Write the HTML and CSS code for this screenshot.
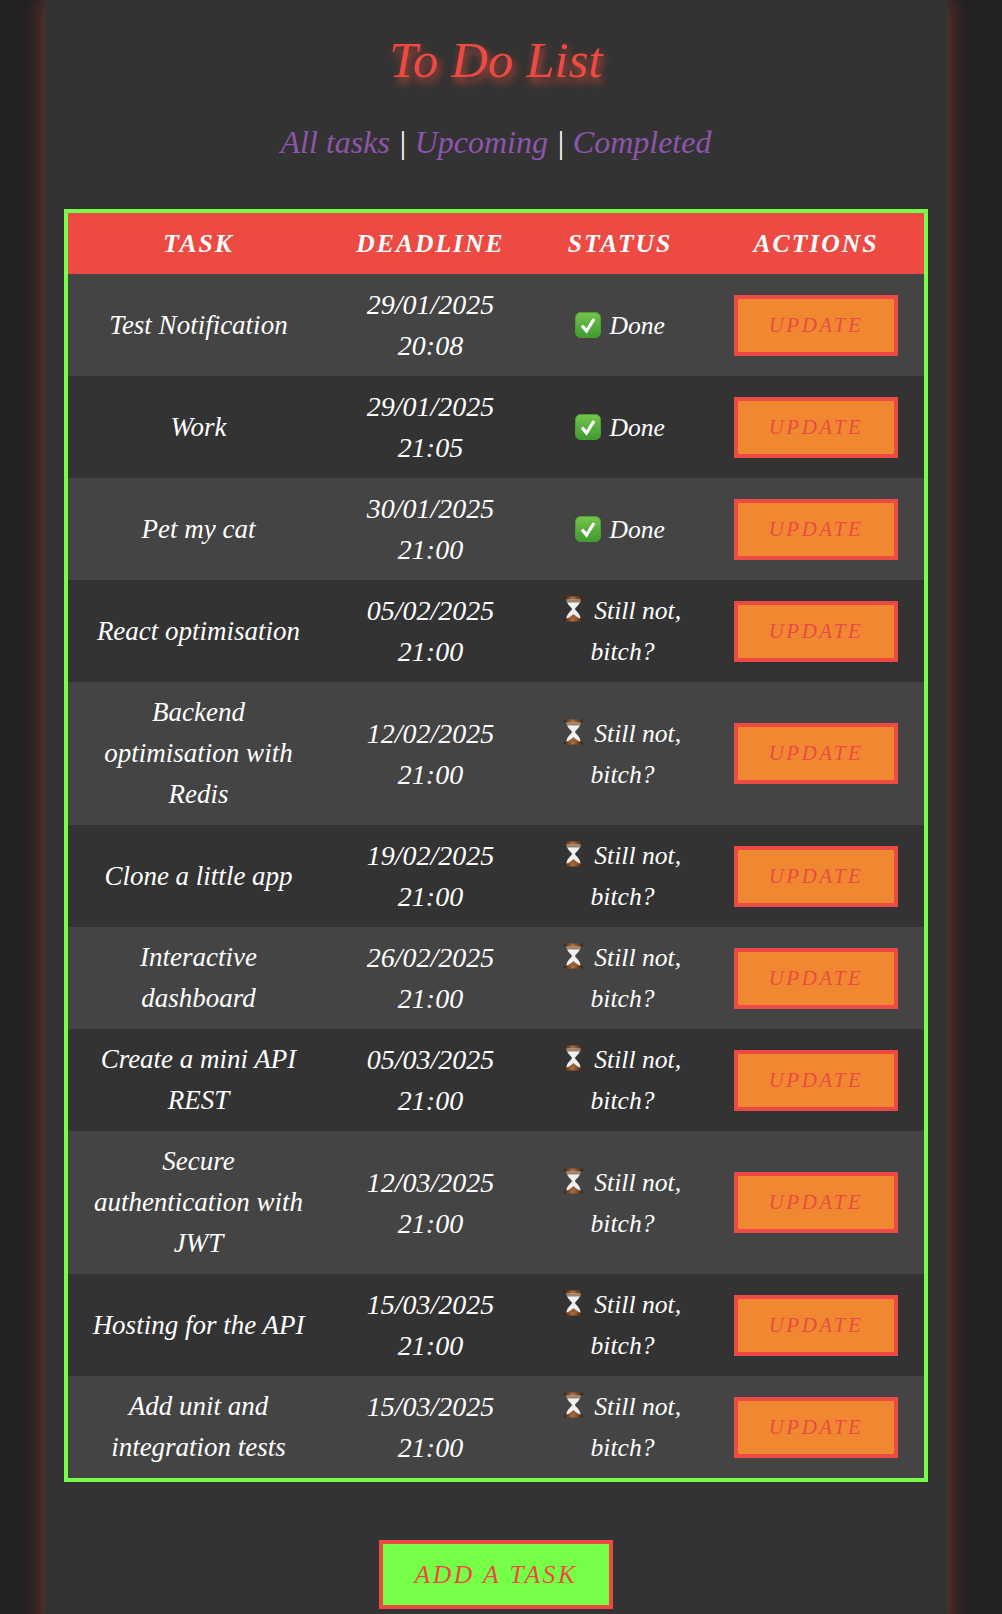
FILE: index.html
```html
<!DOCTYPE html>
<html lang="en"><head><meta charset="utf-8"><title>To Do List</title><link rel="stylesheet" href="styles.css"></head>
<body>
<svg class="defs" width="0" height="0" aria-hidden="true">
  <defs>
    <linearGradient id="g" x1="0" y1="0" x2="0" y2="1"><stop offset="0" stop-color="#74c54c"/><stop offset="1" stop-color="#3f9a2f"/></linearGradient>
    <linearGradient id="b" x1="0" y1="0" x2="1" y2="0"><stop offset="0" stop-color="#3a1e0e"/><stop offset=".45" stop-color="#b0703c"/><stop offset="1" stop-color="#3a1e0e"/></linearGradient>
    <symbol id="check" viewBox="0 0 26 26"><rect x="0.5" y="0.5" width="25" height="25" rx="5" fill="url(#g)" stroke="#4c9a38"/><path d="M7 13.5 L11.5 19 L19 7" fill="none" stroke="#fff" stroke-width="3.2"/></symbol>
    <symbol id="glass" viewBox="0 0 19 26"><path d="M2.5 3 H16.5 C16.5 8.5 12 10.5 11 13 C12 15.5 16.5 17.5 16.5 23 H2.5 C2.5 17.5 7 15.5 8 13 C7 10.5 2.5 8.5 2.5 3Z" fill="#f0f0f0"/><path d="M2.7 3.5 H16.3 V6.5 H2.9Z" fill="#9a8470"/><path d="M9.5 18 C11 20 14 21 16.4 23 H2.6 C5 21 8 20 9.5 18Z" fill="#96603a"/><rect x="0" y="0.5" width="19" height="3" rx="1" fill="url(#b)"/><rect x="0" y="22.5" width="19" height="3" rx="1" fill="url(#b)"/></symbol>
  </defs>
</svg>
<main class="page">
  <h1 class="title">To Do List</h1>
  <nav class="nav"><a href="#">All tasks</a> | <a href="#">Upcoming</a> | <a href="#">Completed</a></nav>
  <table class="tasks">
    <thead><tr><th>Task</th><th>Deadline</th><th>Status</th><th>Actions</th></tr></thead>
    <tbody>
      <tr><td>Test Notification</td><td>29/01/2025 20:08</td><td><svg class="ic"><use href="#check"/></svg> Done</td><td><button class="upd">Update</button></td></tr>
      <tr><td>Work</td><td>29/01/2025 21:05</td><td><svg class="ic"><use href="#check"/></svg> Done</td><td><button class="upd">Update</button></td></tr>
      <tr><td>Pet my cat</td><td>30/01/2025 21:00</td><td><svg class="ic"><use href="#check"/></svg> Done</td><td><button class="upd">Update</button></td></tr>
      <tr><td>React optimisation</td><td>05/02/2025 21:00</td><td class="wait"><svg class="hg"><use href="#glass"/></svg> Still not, bitch?</td><td><button class="upd">Update</button></td></tr>
      <tr><td>Backend optimisation with Redis</td><td>12/02/2025 21:00</td><td class="wait"><svg class="hg"><use href="#glass"/></svg> Still not, bitch?</td><td><button class="upd">Update</button></td></tr>
      <tr><td>Clone a little app</td><td>19/02/2025 21:00</td><td class="wait"><svg class="hg"><use href="#glass"/></svg> Still not, bitch?</td><td><button class="upd">Update</button></td></tr>
      <tr><td>Interactive dashboard</td><td>26/02/2025 21:00</td><td class="wait"><svg class="hg"><use href="#glass"/></svg> Still not, bitch?</td><td><button class="upd">Update</button></td></tr>
      <tr><td>Create a mini API REST</td><td>05/03/2025 21:00</td><td class="wait"><svg class="hg"><use href="#glass"/></svg> Still not, bitch?</td><td><button class="upd">Update</button></td></tr>
      <tr><td>Secure authentication with JWT</td><td>12/03/2025 21:00</td><td class="wait"><svg class="hg"><use href="#glass"/></svg> Still not, bitch?</td><td><button class="upd">Update</button></td></tr>
      <tr><td>Hosting for the API</td><td>15/03/2025 21:00</td><td class="wait"><svg class="hg"><use href="#glass"/></svg> Still not, bitch?</td><td><button class="upd">Update</button></td></tr>
      <tr><td>Add unit and integration tests</td><td>15/03/2025 21:00</td><td class="wait"><svg class="hg"><use href="#glass"/></svg> Still not, bitch?</td><td><button class="upd">Update</button></td></tr>
    </tbody>
  </table>
  <div class="add-wrap"><button class="add">Add a task</button></div>
</main>
</body></html>
```
FILE: styles.css
```css
* { box-sizing: border-box; }
html, body { margin: 0; height: 100%; }
body { background: #222222; font-family: "Liberation Serif", serif; font-style: italic; color: #fff; overflow: hidden; }
.defs { position: absolute; }
.page { width: 904px; min-height: 1614px; margin-left: 44px; padding: 20px; background: #333333; box-shadow: 0 0 20px rgba(231, 76, 60, 0.5); }
.title { margin: 0; padding-top: 13px; font-size: 51px; line-height: 55px; font-weight: 400; text-align: center; color: #ec4a43; text-shadow: 2px 5px 8px rgba(231, 76, 60, 0.85); }
.nav { margin-top: 36px; font-size: 32px; line-height: 37px; text-align: center; color: #fff; }
.nav a { color: #8e55ab; text-decoration: none; }
.tasks { width: 864px; margin-top: 48px; border: 4px solid #76ff47; border-collapse: separate; border-spacing: 0; table-layout: fixed; font-size: 25.6px; line-height: 41px; text-align: center; }
.tasks th:nth-child(1) { width: 261px; }
.tasks th:nth-child(2) { width: 203px; }
.tasks th:nth-child(3) { width: 176px; }
.tasks th { height: 61px; padding: 0 10px; background: #ec4a43; font-weight: 700; letter-spacing: 2px; text-transform: uppercase; }
.tasks td { padding: 10px 23px; vertical-align: middle; }
.tasks td:nth-child(1) { font-size: 27px; }
.tasks td:nth-child(2) { font-size: 28px; }
.tasks td.wait { padding: 10px 18px 10px 23px; }
.tasks tbody tr:nth-child(odd) { background: #444444; }
.tasks tbody tr:nth-child(even) { background: #333333; }
.ic { width: 26px; height: 26px; vertical-align: -4px; margin-right: 2px; }
.hg { width: 19px; height: 26px; vertical-align: -3px; margin-right: 5px; }
button { font-family: inherit; font-style: italic; text-transform: uppercase; color: #ec4a43; border: 4px solid #ec4a43; cursor: pointer; }
.upd { width: 164px; height: 61px; padding: 0; font-size: 21px; letter-spacing: 2.5px; background: #f08832; }
.add-wrap { margin-top: 58px; text-align: center; }
.add { width: 234px; height: 69px; padding: 0; font-size: 25.6px; letter-spacing: 2.5px; background: #76ff47; }
```
